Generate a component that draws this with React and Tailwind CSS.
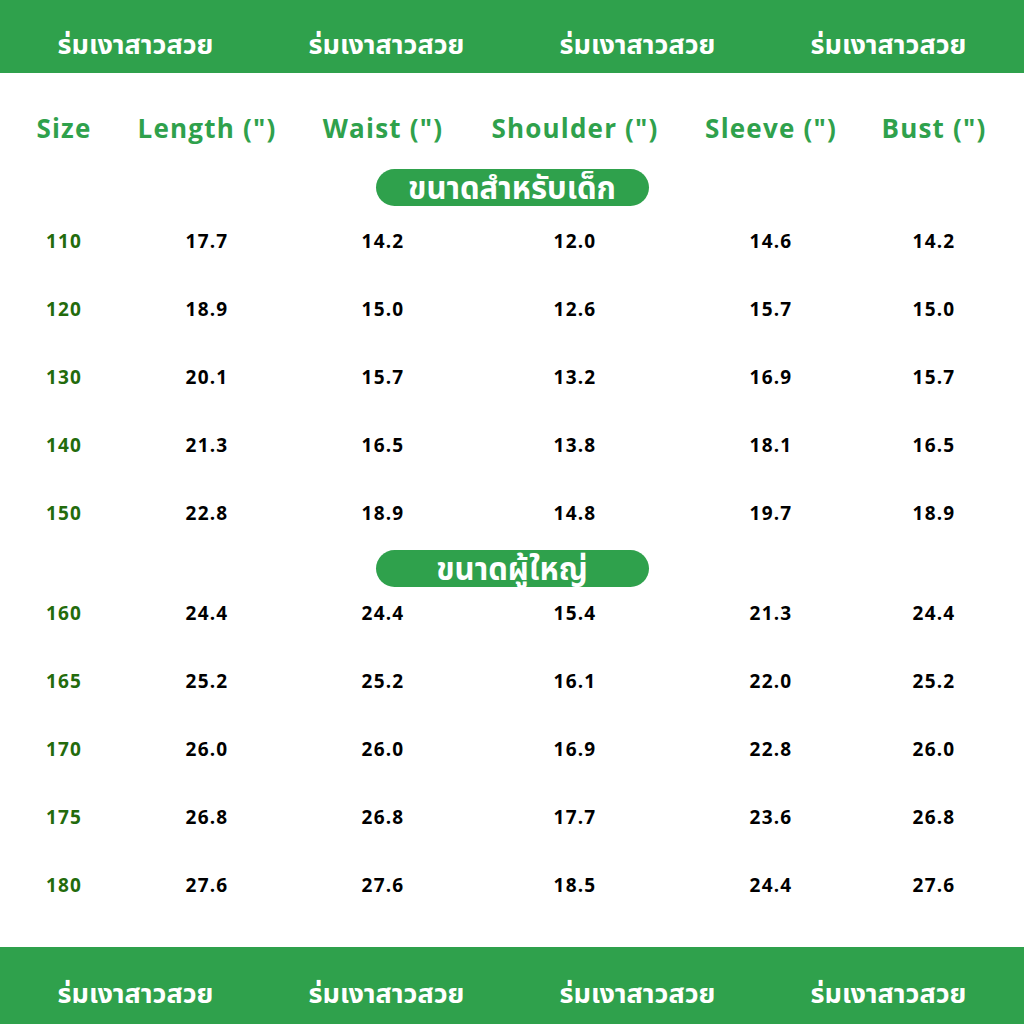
import React from "react";

const FONT = { fontFamily: '"Open Sans", "Noto Sans Thai", "Noto Sans", sans-serif' };

const headers = ["Size", 'Length (")', 'Waist (")', 'Shoulder (")', 'Sleeve (")', 'Bust (")'];

const kids = [
  ["110", "17.7", "14.2", "12.0", "14.6", "14.2"],
  ["120", "18.9", "15.0", "12.6", "15.7", "15.0"],
  ["130", "20.1", "15.7", "13.2", "16.9", "15.7"],
  ["140", "21.3", "16.5", "13.8", "18.1", "16.5"],
  ["150", "22.8", "18.9", "14.8", "19.7", "18.9"],
];

const adults = [
  ["160", "24.4", "24.4", "15.4", "21.3", "24.4"],
  ["165", "25.2", "25.2", "16.1", "22.0", "25.2"],
  ["170", "26.0", "26.0", "16.9", "22.8", "26.0"],
  ["175", "26.8", "26.8", "17.7", "23.6", "26.8"],
  ["180", "27.6", "27.6", "18.5", "24.4", "27.6"],
];

const GRID = "grid grid-cols-[128px_158px_194px_190px_202px_124px]";

function Banner({ h }) {
  return (
    <div className={`${h} bg-[#2fa14c] flex items-center justify-center pt-[14px]`}>
      {[0, 1, 2, 3].map((i) => (
        <div key={i} className="w-[251px] text-center text-white font-bold text-[27px] leading-none">
          ร่มเงาสาวสวย
        </div>
      ))}
    </div>
  );
}

function Pill({ children }) {
  return (
    <div className="flex justify-center">
      <div className="w-[273px] h-[37px] rounded-full bg-[#2fa14c] flex items-center justify-center text-white font-bold text-[31px] leading-none">
        {children}
      </div>
    </div>
  );
}

function Rows({ data }) {
  return (
    <div className="flex flex-col gap-[28px]">
      {data.map((r) => (
        <div key={r[0]} className={`${GRID} h-[40px] items-center`}>
          {r.map((c, j) => (
            <div
              key={j}
              className={`text-center font-bold text-[19px] tracking-[1.2px] leading-none ${j === 0 ? "text-[#236b0c]" : "text-black"}`}
            >
              {c}
            </div>
          ))}
        </div>
      ))}
    </div>
  );
}

export default function App() {
  return (
    <div className="w-[1024px] h-[1024px] bg-white flex flex-col overflow-hidden" style={FONT}>
      <Banner h="h-[73px]" />
      <div className={`${GRID} h-[40px] mt-[35px] items-center`}>
        {headers.map((h) => (
          <div key={h} className="text-center font-bold text-[26px] tracking-[1.2px] leading-none text-[#2fa14c] whitespace-nowrap">
            {h}
          </div>
        ))}
      </div>
      <div className="mt-[21px]">
        <Pill>ขนาดสำหรับเด็ก</Pill>
      </div>
      <div className="mt-[15px]">
        <Rows data={kids} />
      </div>
      <div className="mt-[17px]">
        <Pill>ขนาดผู้ใหญ่</Pill>
      </div>
      <div className="mt-[6px]">
        <Rows data={adults} />
      </div>
      <div className="flex-1" />
      <Banner h="h-[77px]" />
    </div>
  );
}
